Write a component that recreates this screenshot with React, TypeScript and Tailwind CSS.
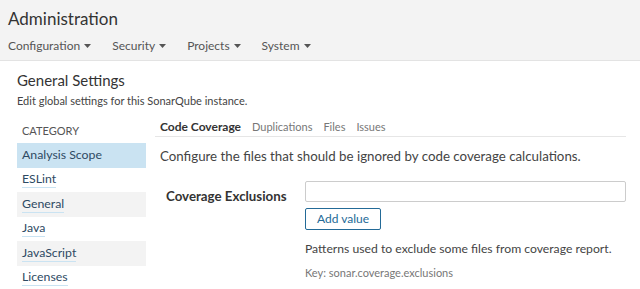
const categories = ['Analysis Scope', 'ESLint', 'General', 'Java', 'JavaScript', 'Licenses'];
const tabs = ['Code Coverage', 'Duplications', 'Files', 'Issues'];

function Caret() {
  return (
    <svg width="7" height="4" viewBox="0 0 7 4" className="ml-[4px] inline-block">
      <path d="M0 0h7L3.5 4z" fill="#555" />
    </svg>
  );
}

export default function App() {
  return (
    <div className="w-[640px] h-[289px] overflow-hidden bg-white text-[#444] font-['Lato',sans-serif]">
      <div className="h-[61px] bg-[#f3f3f3] border-b border-[#e3e3e3] px-[8px]">
        <div className="pt-[7px] text-[17px] leading-[24px] text-[#333]">Administration</div>
        <div className="flex gap-[21px] mt-[6px] text-[12px] leading-[18px] text-[#555]">
          {['Configuration', 'Security', 'Projects', 'System'].map((n) => (
            <span key={n} className="flex items-center">
              {n}
              <Caret />
            </span>
          ))}
        </div>
      </div>

      <div className="px-[17px]">
        <div className="mt-[9px] text-[15px] leading-[20px] text-[#333]">General Settings</div>
        <div className="mt-[3px] text-[11px] leading-[15px]">Edit global settings for this SonarQube instance.</div>

        <div className="flex mt-[10px]">
          <div className="w-[129px] shrink-0">
            <div className="h-[25px] pt-[5px] pl-[5px] text-[11px] leading-[15px] text-[#555]">CATEGORY</div>
            {categories.map((c, i) => (
              <div
                key={c}
                className={
                  'h-[24.5px] flex items-center pl-[5px] text-[12.3px] ' +
                  (i === 0 ? 'bg-[#cae3f2]' : i % 2 === 0 ? 'bg-[#f3f3f3]' : '')
                }
              >
                <span
                  className={
                    'leading-[16px] text-[#2e4a63] ' +
                    (i === 0 ? '' : 'border-b border-[#cae3f2]')
                  }
                >
                  {c}
                </span>
              </div>
            ))}
          </div>

          <div className="flex-1 ml-[9px]">
            <div className="h-[19px] border-b border-[#e6e6e6] flex gap-[11px] pl-[5px] text-[11px] leading-[18px]">
              {tabs.map((t, i) => (
                <span key={t} className={i === 0 ? 'font-bold text-[12px] text-[#333]' : 'text-[#777]'}>
                  {t}
                </span>
              ))}
            </div>
            <div className="mt-[10px] pl-[5px] text-[13.3px] leading-[18px]">
              Configure the files that should be ignored by code coverage calculations.
            </div>

            <div className="flex mt-[16px]">
              <div className="w-[150px] shrink-0 pl-[11px] pt-[6px] text-[13.3px] leading-[18px] font-bold text-[#333]">
                Coverage Exclusions
              </div>
              <div className="flex-1">
                <div className="w-[321px] h-[21px] border border-[#ccc] rounded-[2px] bg-white" />
                <button className="mt-[6px] w-[76px] h-[22px] border border-[#236a97] rounded-[2px] bg-white text-[12px] leading-[18px] text-[#236a97]">
                  Add value
                </button>
                <div className="mt-[11px] text-[12.2px] leading-[16px]">
                  Patterns used to exclude some files from coverage report.
                </div>
                <div className="mt-[9px] text-[11px] leading-[14px] text-[#777]">
                  Key: sonar.coverage.exclusions
                </div>
              </div>
            </div>
          </div>
        </div>
      </div>
    </div>
  );
}
